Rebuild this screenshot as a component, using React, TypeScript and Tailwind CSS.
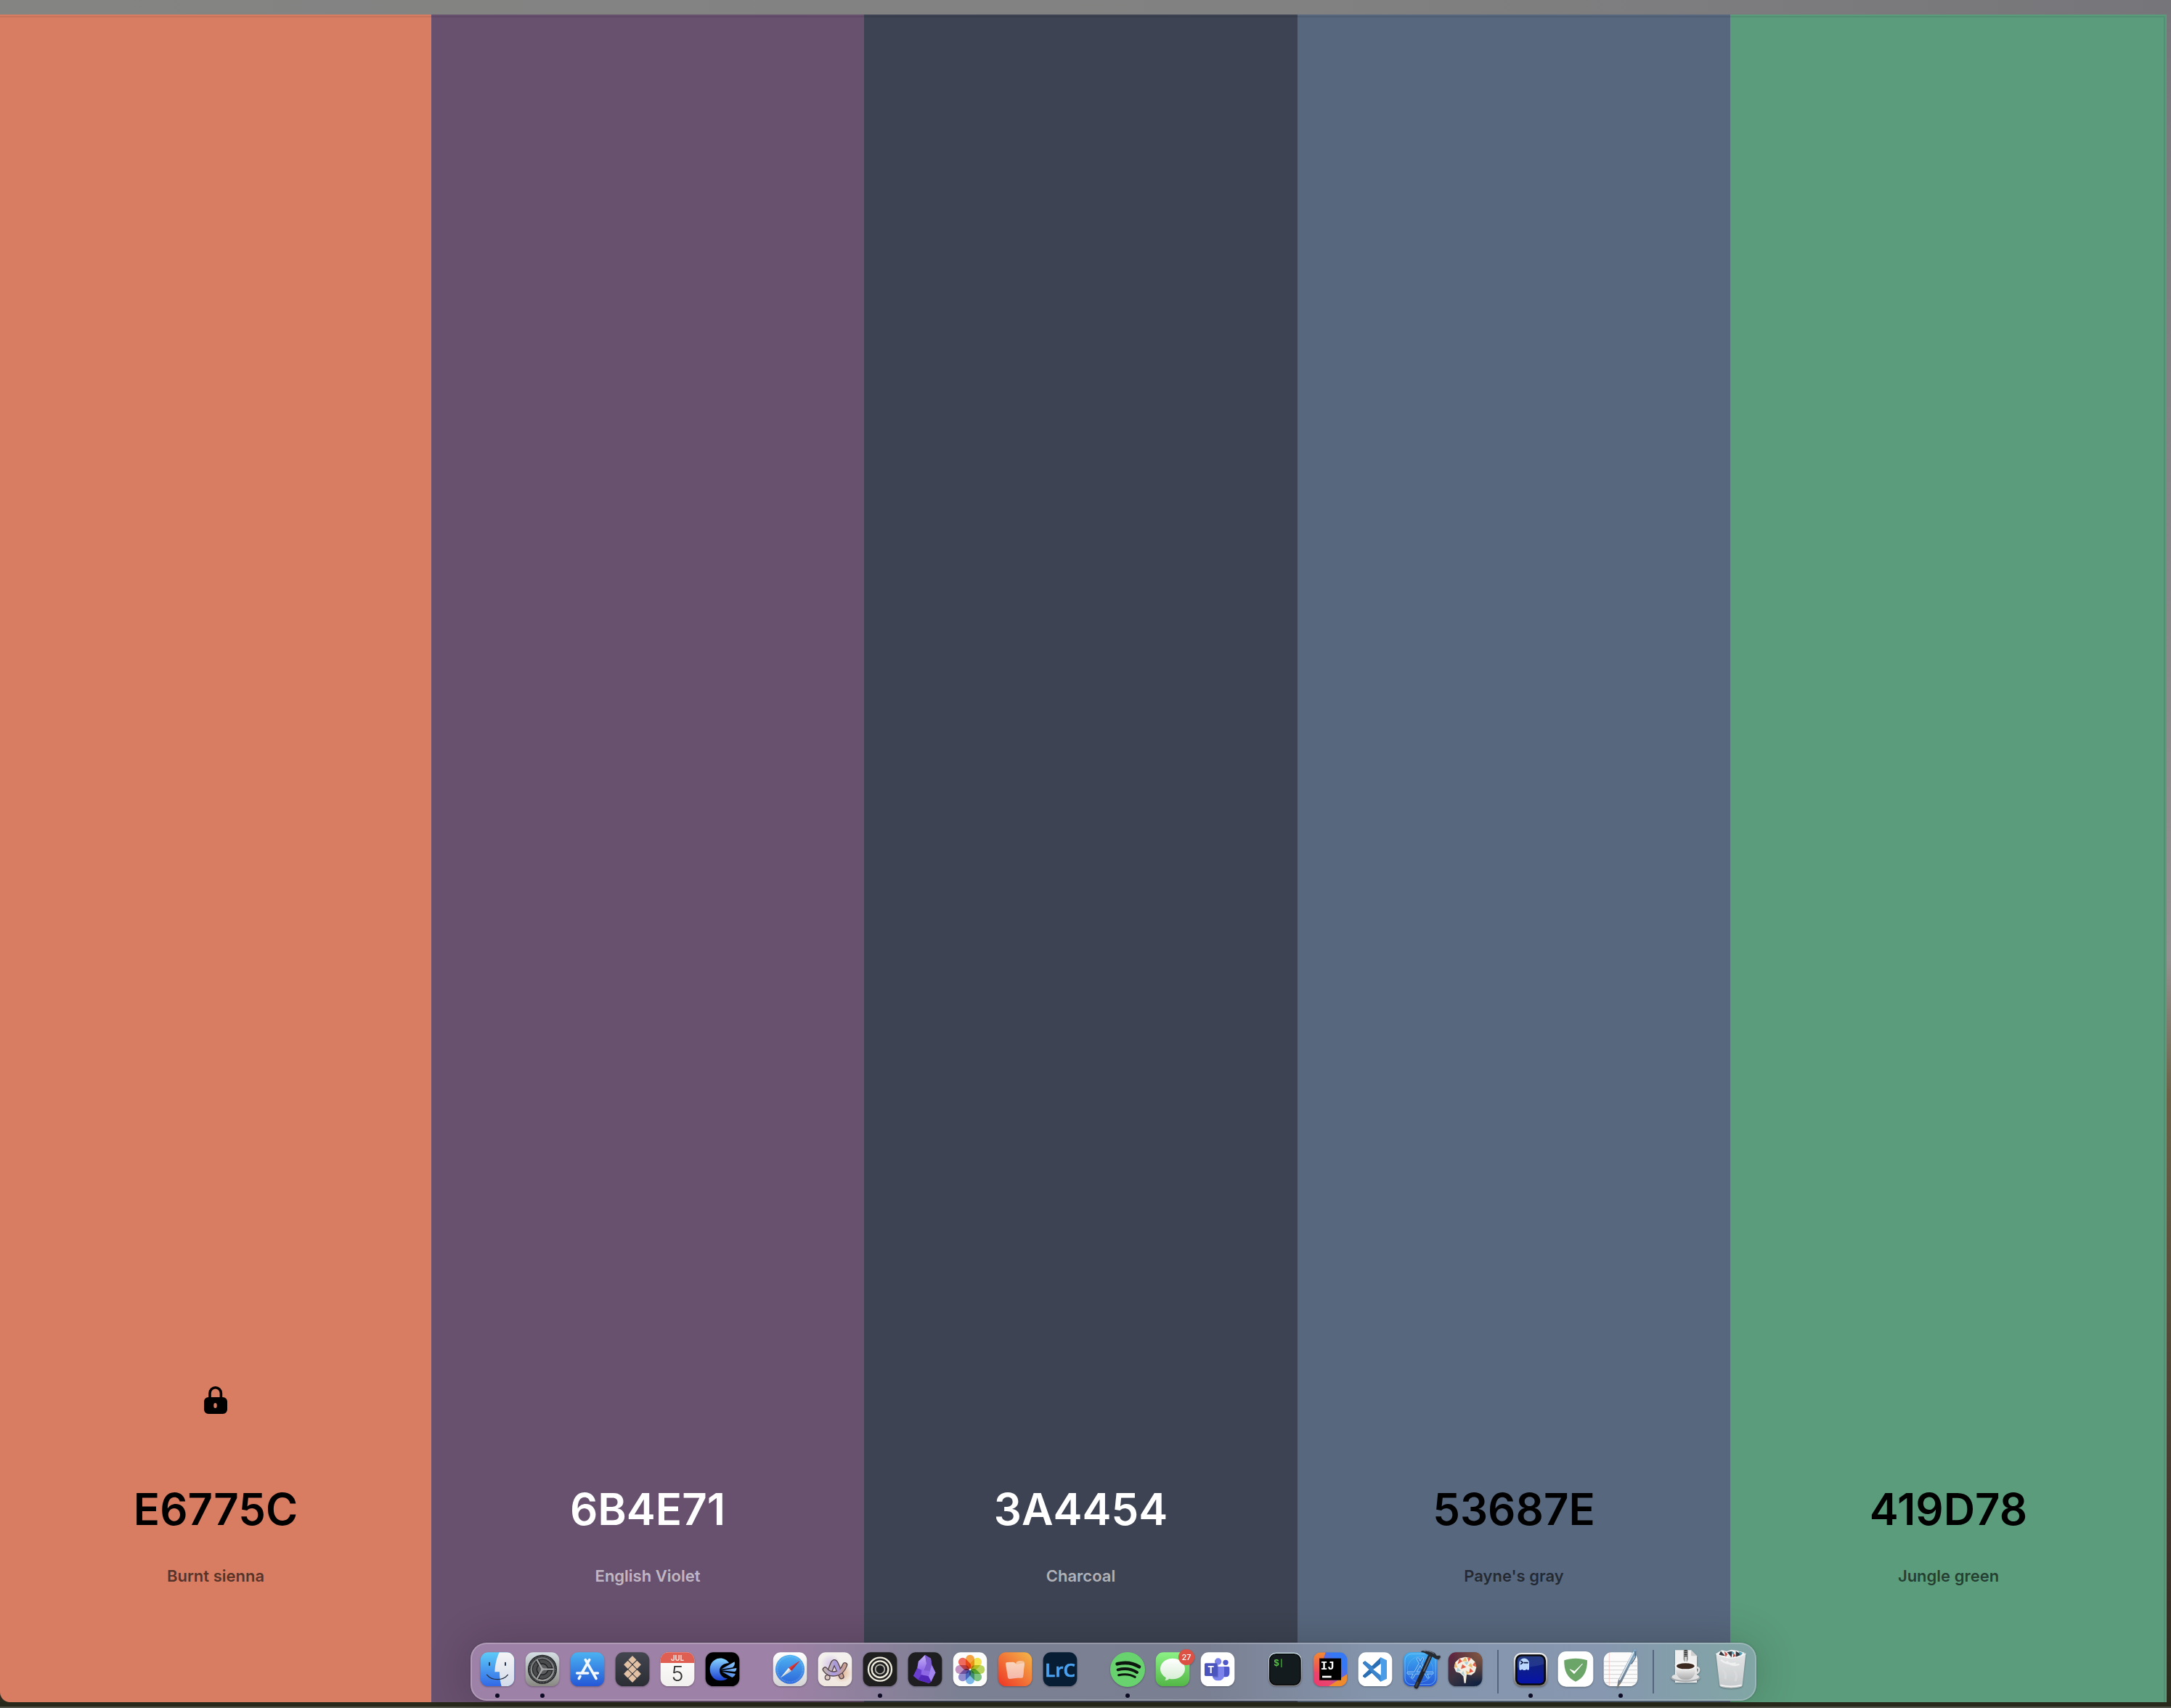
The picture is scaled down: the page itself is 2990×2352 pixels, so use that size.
import type { ReactNode } from "react";

type Swatch = { hex: string; name: string; column: string; ink: string; caption: string; locked?: boolean };

const swatches: Swatch[] = [
  { hex: "E6775C", name: "Burnt sienna", column: "bg-[#d87c62] w-[594px] rounded-bl-[14px]", ink: "text-black", caption: "text-black/60", locked: true },
  { hex: "6B4E71", name: "English Violet", column: "bg-[#68506f] w-[596px]", ink: "text-white", caption: "text-white/60" },
  { hex: "3A4454", name: "Charcoal", column: "bg-[#3d4352] w-[597px]", ink: "text-white", caption: "text-white/60" },
  { hex: "53687E", name: "Payne's gray", column: "bg-[#57677d] w-[596px]", ink: "text-black", caption: "text-black/60" },
  { hex: "419D78", name: "Jungle green", column: "bg-[#5b9c7c] w-[601px]", ink: "text-black", caption: "text-black/60" },
];

function LockIcon() {
  return (
    <svg viewBox="0 0 32 40" className="h-10 w-8" aria-hidden="true">
      <path d="M8 18V10.500a7.700 7.700 0 0 1 15.400 0V18" fill="none" stroke="#000" strokeWidth="3.600" />
      <path
        fillRule="evenodd"
        d="M6 16H26a6 6 0 0 1 6 6V33a6 6 0 0 1-6 6H6a6 6 0 0 1-6-6V22a6 6 0 0 1 6-6ZM15.500 24a2.200 2.200 0 0 0-2.200 2.200v2.600a2.200 2.200 0 0 0 4.400 0v-2.600a2.200 2.200 0 0 0-2.200-2.200Z"
      />
    </svg>
  );
}

function SwatchColumn({ swatch }: { swatch: Swatch }) {
  return (
    <section className={`flex shrink flex-col items-center justify-end pb-40 ${swatch.column}`}>
      {swatch.locked && (
        <button aria-label="Unlock color" className="mb-[94px]">
          <LockIcon />
        </button>
      )}
      <button className={`text-[60px] leading-[72px] font-semibold ${swatch.ink}`}>{swatch.hex}</button>
      <button className={`mt-[42px] text-[22px] leading-[28px] font-semibold ${swatch.caption}`}>{swatch.name}</button>
    </section>
  );
}

function Gradient({ id, from, to, diagonal }: { id: string; from: string; to: string; diagonal?: boolean }) {
  return (
    <linearGradient id={id} x1={diagonal ? "1" : "0"} y1="0" x2="0" y2="1">
      <stop offset="0" stopColor={from} />
      <stop offset="1" stopColor={to} />
    </linearGradient>
  );
}

function Tile({ fill }: { fill: string }) {
  return <rect x="8" y="13" width="140" height="140" rx="32" fill={fill} />;
}

function Glyph({ children }: { children: ReactNode }) {
  return (
    <svg viewBox="0 0 156 168" className="h-[56px] w-[52px] overflow-visible drop-shadow-[0_1px_1px_rgba(0,0,0,0.3)]" aria-hidden="true">
      {children}
    </svg>
  );
}

const Finder = (
  <Glyph>
    <Gradient id="fi-a" from="#5ecbf8" to="#3268e6" />
    <Gradient id="fi-b" from="#f5f5f6" to="#d3dbea" />
    <clipPath id="fi-c"><rect x="8" y="13" width="140" height="140" rx="32" /></clipPath>
    <Tile fill="url(#fi-a)" />
    <path clipPath="url(#fi-c)" d="M86 13C74 40 68 65 67 94H87C87 115 90 135 95 153H148V13Z" fill="url(#fi-b)" />
    <path d="M45 56V66M111 56V66" stroke="#23364b" strokeWidth="6" strokeLinecap="round" />
    <path d="M35 106C55 131 101 131 121 106" fill="none" stroke="#23303f" strokeWidth="4" strokeLinecap="round" />
  </Glyph>
);

const Settings = (
  <Glyph>
    <Gradient id="se-a" from="#d5dfe4" to="#898883" />
    <Gradient id="se-b" from="#6c6f72" to="#9a9a99" />
    <Tile fill="url(#se-a)" />
    <circle cx="78" cy="83" r="60" fill="#1c1e20" />
    <circle cx="78" cy="83" r="54" fill="none" stroke="#6d7174" strokeWidth="5" strokeDasharray="3 3" />
    <circle cx="78" cy="83" r="46" fill="#4a4c4e" stroke="url(#se-b)" strokeWidth="8" />
    <circle cx="78" cy="83" r="41" fill="none" stroke="#1b1d1f" strokeWidth="3" />
    <path d="M78 83H122M78 83L56 45M78 83L56 121" stroke="#1b1d1f" strokeWidth="14" />
    <circle cx="78" cy="83" r="23" fill="#5b5d5f" stroke="#1b1d1f" strokeWidth="4" />
    <path d="M78 83H124M78 83L55 43M78 83L55 123" stroke="#a3a5a6" strokeWidth="7" />
    <circle cx="78" cy="83" r="6" fill="#a3a5a6" />
  </Glyph>
);

const AppStore = (
  <Glyph>
    <Gradient id="as-a" from="#4bb2f1" to="#2457d6" />
    <Tile fill="url(#as-a)" />
    <path d="M86 44L55 99M48 112L43 121M70 44L114 121M35 99H80M103 99H121" stroke="#f4f8ff" strokeWidth="11" strokeLinecap="round" fill="none" />
  </Glyph>
);

const diamondSpots = [[78, 44], [59, 64], [97, 64], [78, 83], [59, 102], [97, 102], [78, 121]];

const Setapp = (
  <Glyph>
    <Gradient id="sa-a" from="#43464f" to="#2a2d33" />
    <Tile fill="url(#sa-a)" />
    {diamondSpots.map(([x, y]) => (
      <path key={`${x}-${y}`} d={`M${x} ${y - 14}L${x + 14} ${y}L${x} ${y + 14}L${x - 14} ${y}Z`} fill="#e3c1a5" stroke="#e3c1a5" strokeWidth="4" strokeLinejoin="round" />
    ))}
  </Glyph>
);

const Calendar = (
  <Glyph>
    <Gradient id="ca-a" from="#ffffff" to="#f1efed" />
    <Tile fill="url(#ca-a)" />
    <path d="M8 57V45A32 32 0 0 1 40 13H116A32 32 0 0 1 148 45V57Z" fill="#df6052" />
    <text x="78" y="47" textAnchor="middle" fontSize="29" fontWeight="700" fill="#fbe6e2">JUL</text>
    <text x="78" y="132" textAnchor="middle" fontSize="86" fontWeight="300" fill="#2e2e2e">5</text>
  </Glyph>
);

const Comet = (
  <Glyph>
    <Gradient id="co-a" from="#86d4ff" to="#1b3fd0" />
    <Gradient id="co-b" from="#8fd0fb" to="#3d6fe0" diagonal />
    <Tile fill="#000" />
    <path d="M105 57C95 40 75 34 57 39C38 45 26 63 26 83C26 108 44 130 70 130C82 130 93 127 99 121C82 120 66 106 66 89C66 74 78 59 105 57Z" fill="url(#co-a)" />
    <path d="M72 83L128 52Q131 66 120 76ZM74 88L136 78Q137 89 128 93ZM76 93L132 102Q128 113 118 117Z" fill="url(#co-b)" />
  </Glyph>
);

const Safari = (
  <Glyph>
    <Gradient id="sf-a" from="#ffffff" to="#d4d4d4" />
    <Gradient id="sf-b" from="#4fb4f3" to="#2c67d9" />
    <Tile fill="url(#sf-a)" />
    <circle cx="78" cy="83" r="60" fill="url(#sf-b)" />
    <circle cx="78" cy="83" r="53" fill="none" stroke="#b7dcf8" strokeOpacity="0.600" strokeWidth="7" strokeDasharray="1.500 4" />
    <path d="M119 47L72 77L84 89Z" fill="#e33b34" />
    <path d="M39 118L72 77L84 89Z" fill="#f5f5f5" />
    <path d="M39 118L78 83L84 89Z" fill="#c5cbd2" />
    <path d="M119 47L78 83L84 89Z" fill="#b92d33" />
  </Glyph>
);

const arcSwoosh = "M37 84C58 112 104 108 119 65";
const arcPeak = "M56 92L69 60Q75 46 82 60L105 113";

const Arc = (
  <Glyph>
    <Gradient id="ar-a" from="#f3f1ef" to="#efe6df" />
    <linearGradient id="ar-b" x1="0" y1="0" x2="1" y2="0">
      <stop offset="0" stopColor="#bdb0ae" />
      <stop offset="0.450" stopColor="#a99be3" />
      <stop offset="1" stopColor="#c9a08c" />
    </linearGradient>
    <radialGradient id="ar-c">
      <stop offset="0" stopColor="#dfa67c" stopOpacity="0.800" />
      <stop offset="1" stopColor="#dfa67c" stopOpacity="0" />
    </radialGradient>
    <radialGradient id="ar-d">
      <stop offset="0" stopColor="#b69aea" stopOpacity="0.500" />
      <stop offset="1" stopColor="#b69aea" stopOpacity="0" />
    </radialGradient>
    <Tile fill="url(#ar-a)" />
    <circle cx="108" cy="98" r="40" fill="url(#ar-c)" />
    <circle cx="60" cy="62" r="42" fill="url(#ar-d)" />
    <circle cx="47" cy="117" r="10" fill="#dccac0" stroke="#55444a" strokeWidth="4" />
    <path d={arcPeak} fill="none" stroke="#55434b" strokeWidth="22" strokeLinecap="round" strokeLinejoin="round" />
    <path d={arcPeak} fill="none" stroke="url(#ar-b)" strokeWidth="14" strokeLinecap="round" strokeLinejoin="round" />
    <path d={arcSwoosh} fill="none" stroke="#55434b" strokeWidth="22" strokeLinecap="round" />
    <path d={arcSwoosh} fill="none" stroke="url(#ar-b)" strokeWidth="14" strokeLinecap="round" />
    <path d="M80 58L92 86" fill="none" stroke="#a899d8" strokeWidth="13" strokeLinecap="round" />
  </Glyph>
);

const Rings = (
  <Glyph>
    <Tile fill="#1f1f1f" />
    <g fill="none" stroke="#f0eddf">
      <circle cx="78" cy="83" r="48" strokeWidth="7" />
      <circle cx="78" cy="83" r="34" strokeWidth="7" />
      <circle cx="78" cy="83" r="19" strokeWidth="5" stroke="#b9b7ae" />
    </g>
  </Glyph>
);

const Obsidian = (
  <Glyph>
    <Gradient id="ob-a" from="#c6b2f7" to="#8d66e6" />
    <Tile fill="#1e1e20" />
    <path d="M78 24L102 38L106 65L121 97L103 134L94 141L52 128L30 110L46 77L51 50Z" fill="#7a4bd8" />
    <path d="M78 24L51 50L46 79L73 90L84 60Z" fill="url(#ob-a)" />
    <path d="M78 24L102 38L106 65L98 90L76 88L85 60Z" fill="#7c5ccf" />
    <path d="M106 65L121 97L103 134L92 112L98 90Z" fill="#a184ee" />
    <path d="M46 79L30 110L49 126L62 106L64 87Z" fill="#6a3fd0" />
    <path d="M64 86L98 90L92 112L62 106Z" fill="#8e68e4" />
    <path d="M62 106L92 112L103 134L94 141L49 126Z" fill="#5327b8" />
  </Glyph>
);

const petals = ["#f59a2c", "#f2e03b", "#b0cf4a", "#6dbb72", "#6fb0e6", "#8480c8", "#bb86bd", "#ec5b4c"];

const Photos = (
  <Glyph>
    <Tile fill="#fdfdfd" />
    <g className="isolate">
      {petals.map((color, i) => (
        <rect key={color} x="60" y="23" width="36" height="59" rx="18" fill={color} opacity="0.900" transform={`rotate(${i * 45} 78 84)`} className="mix-blend-multiply" />
      ))}
    </g>
    <circle cx="78" cy="84" r="4" fill="#f3f3ef" />
  </Glyph>
);

const Paste = (
  <Glyph>
    <Gradient id="pa-a" from="#f5b94a" to="#ee3324" diagonal />
    <Gradient id="pa-b" from="#f9d6be" to="#f5b6a8" />
    <Tile fill="url(#pa-a)" />
    <path d="M82 56Q86 48 98 48Q118 48 117 58L111 114Q110 119 104 119L80 116Z" fill="#f6c29a" />
    <path d="M39 60Q39 54 46 54L70 53C78 53 80 64 90 62L112 58Q117 58 116 64L111 112Q110 117 104 117L56 123Q49 123 48 117Z" fill="url(#pa-b)" />
  </Glyph>
);

const Lightroom = (
  <Glyph>
    <Tile fill="#061d34" />
    <text x="78" y="114" textAnchor="middle" fontSize="78" fontWeight="600" fill="#4aa3f2" stroke="#4aa3f2" strokeWidth="2" className="font-['Open_Sans',sans-serif]">LrC</text>
  </Glyph>
);

const Spotify = (
  <Glyph>
    <circle cx="78" cy="84" r="72" fill="#67d26e" />
    <path d="M35 61Q86 48 126 73" fill="none" stroke="#0d160e" strokeWidth="14" strokeLinecap="round" />
    <path d="M38 85Q82 74 117 96" fill="none" stroke="#0d160e" strokeWidth="12" strokeLinecap="round" />
    <path d="M41 107Q80 98 109 115" fill="none" stroke="#0d160e" strokeWidth="9" strokeLinecap="round" />
  </Glyph>
);

const Messages = (
  <Glyph>
    <Gradient id="me-a" from="#8cf285" to="#52b746" />
    <Gradient id="me-b" from="#ffffff" to="#d5edd2" />
    <Tile fill="url(#me-a)" />
    <path d="M78 38C106 38 129 57 129 81C129 105 106 124 78 124Q70 124 64 122Q57 129 46 129Q51 123 50 117C36 109 27 96 27 81C27 57 50 38 78 38Z" fill="url(#me-b)" />
    <circle cx="135" cy="33" r="33" fill="#dd5145" />
    <text x="135" y="45" textAnchor="middle" fontSize="33" fontWeight="500" fill="#fff">27</text>
  </Glyph>
);

const Teams = (
  <Glyph>
    <Tile fill="#fff" />
    <circle cx="111" cy="55" r="11" fill="#5059c9" />
    <path d="M98 72H122Q127 72 127 77V98Q127 115 111 115H98Z" fill="#5059c9" />
    <circle cx="80" cy="51" r="14" fill="#7b83eb" />
    <path d="M56 72H100Q105 72 105 77V104Q105 130 80 130Q60 130 56 110Z" fill="#7b83eb" />
    <path d="M60 66H80V116H58Z" fill="#3f469f" opacity="0.500" />
    <rect x="24" y="58" width="53" height="53" rx="5" fill="#4b53bc" />
    <text x="50" y="99" textAnchor="middle" fontSize="40" fontWeight="700" fill="#fff">T</text>
  </Glyph>
);

const ITerm = (
  <Glyph>
    <Gradient id="it-a" from="#d9f0f7" to="#8b8683" />
    <rect x="9" y="14" width="137" height="138" rx="31" fill="url(#it-a)" />
    <rect x="14" y="20" width="127" height="127" rx="26" fill="#131b1e" stroke="#030405" strokeWidth="4" />
    <text x="31" y="70" fontSize="38" fontWeight="700" fill="#5cc24b" className="font-['Liberation_Mono',monospace]">$</text>
    <rect x="60" y="40" width="5" height="35" fill="#3d8c37" />
  </Glyph>
);

const IntelliJ = (
  <Glyph>
    <clipPath id="ij-c"><rect x="8" y="13" width="140" height="140" rx="32" /></clipPath>
    <linearGradient id="ij-a" x1="0" y1="1" x2="1" y2="0">
      <stop offset="0" stopColor="#f0386b" />
      <stop offset="0.300" stopColor="#e8466f" />
      <stop offset="0.550" stopColor="#6b63d8" />
      <stop offset="0.750" stopColor="#3478f6" />
      <stop offset="1" stopColor="#3478f6" />
    </linearGradient>
    <Gradient id="ij-b" from="#f28a30" to="#ee4560" />
    <g clipPath="url(#ij-c)">
      <rect x="8" y="13" width="140" height="140" fill="url(#ij-a)" />
      <path d="M8 13H59L44 60L30 100L8 90Z" fill="url(#ij-b)" />
      <path d="M148 103L72 153H148Z" fill="#f08b2d" />
    </g>
    <rect x="33" y="38" width="90" height="90" fill="#000" />
    <text x="38" y="84" fontSize="48" fontWeight="700" fill="#fff" className="font-['Liberation_Mono',monospace]">IJ</text>
    <rect x="45" y="110" width="38" height="8" fill="#fff" />
  </Glyph>
);

const VSCode = (
  <Glyph>
    <Tile fill="#fff" />
    <path d="M101 34L64 70L36 49L27 55V59L53 84L27 109V113L36 119L64 98L101 134V108L76 84L101 60Z" fill="#2a6fb4" />
    <path d="M27 58L36 49L101 102V134Z" fill="#3a84cc" />
    <path d="M97 36L101 34L126 46V122L101 134L97 132Q101 130 101 125V43Q101 38 97 36Z" fill="#4b9de8" />
    <path d="M101 60V108L70 84Z" fill="#fff" />
  </Glyph>
);

const Xcode = (
  <Glyph>
    <Gradient id="xc-a" from="#3fb0f2" to="#2456d8" />
    <Tile fill="url(#xc-a)" />
    <rect x="15" y="20" width="126" height="126" rx="27" fill="none" stroke="#8cc8f8" strokeWidth="2" />
    <circle cx="78" cy="83" r="53" fill="none" stroke="#6fb6f2" strokeWidth="1.500" />
    <path d="M88 40L46 116M68 40L110 116M28 98H128" stroke="#b7dcfb" strokeWidth="11" strokeLinecap="round" />
    <path d="M88 40L46 116M68 40L110 116M28 98H128" stroke="#3488e4" strokeWidth="7" strokeLinecap="round" />
    <path d="M121 24L62 154" stroke="#20242a" strokeWidth="18" strokeLinecap="round" />
    <path d="M120 30L92 92" stroke="#5a6069" strokeWidth="6" />
    <path d="M67 138L61 152" stroke="#3b3f46" strokeWidth="8" strokeLinecap="round" />
    <path d="M82 8Q108 0 138 16L146 27L160 26L162 33L154 43L140 40L130 32L104 20Q94 13 82 12Z" fill="#262a31" />
    <path d="M92 8Q114 4 136 19" stroke="#737a84" strokeWidth="3" fill="none" />
  </Glyph>
);

const Brain = (
  <Glyph>
    <linearGradient id="br-a" x1="0" y1="0" x2="0.800" y2="1">
      <stop offset="0" stopColor="#6a2140" />
      <stop offset="0.500" stopColor="#3c3340" />
      <stop offset="1" stopColor="#0f2140" />
    </linearGradient>
    <radialGradient id="br-b" cx="1" cy="0" r="0.900">
      <stop offset="0" stopColor="#8a583f" />
      <stop offset="1" stopColor="#8a583f" stopOpacity="0" />
    </radialGradient>
    <Tile fill="url(#br-a)" />
    <Tile fill="url(#br-b)" />
    <path d="M54 38L78 32L102 37L118 52L124 74L118 95L103 107L84 104L80 140H74L70 112L56 98L40 94L32 76L37 54Z" fill="#f4ede2" />
    <path d="M54 38L66 50L46 62ZM86 34L102 37L92 52ZM118 52L108 66L124 74ZM66 62L82 74L60 82ZM98 78L112 92L94 98Z" fill="#e25b45" />
    <path d="M78 32L86 50L66 50ZM102 56L108 78L90 68ZM37 54L46 76L32 76ZM80 88L98 98L84 104Z" fill="#e8b86b" />
    <path d="M46 76L60 90L42 92ZM92 52L84 66L74 54ZM70 90L76 110L62 100Z" fill="#a8cfd8" />
  </Glyph>
);

const GhostTerminal = (
  <Glyph>
    <Gradient id="gh-a" from="#f1f1f1" to="#77736f" />
    <Gradient id="gh-b" from="#13276f" to="#0613a8" />
    <rect x="8" y="15" width="140" height="140" rx="32" fill="url(#gh-a)" />
    <rect x="15" y="22" width="126" height="127" rx="25" fill="#08090c" />
    <rect x="23" y="29" width="110" height="113" rx="18" fill="url(#gh-b)" />
    <path d="M23 62V47A18 18 0 0 1 41 29H115A18 18 0 0 1 133 47V62Q80 76 23 76Z" fill="#5a78b8" opacity="0.250" />
    <path d="M31 58A20 20 0 0 1 72 58V82Q72 87 67 86L61 83L55 87H49L43 83L36 87Q31 87 31 82Z" fill="#b9d8fb" />
    <path d="M38 49L46 55L38 61M52 56H66" stroke="#0b1740" strokeWidth="5" fill="none" strokeLinecap="round" strokeLinejoin="round" />
  </Glyph>
);

const Shield = (
  <Glyph>
    <rect x="5" y="9" width="146" height="146" rx="34" fill="#fff" />
    <path d="M78 38C95 38 112 41 126 46C127 88 112 120 78 134C44 120 29 88 31 46C45 41 62 38 78 38Z" fill="#6ba568" />
    <path d="M55 84L72 101L106 61L74 92Z" fill="#fff" stroke="#fff" strokeWidth="3" />
  </Glyph>
);

const TextEdit = (
  <Glyph>
    <Gradient id="te-a" from="#7fa9c9" to="#6d7480" />
    <Tile fill="#fbfbfb" />
    <path d="M8 51H148M8 69H148M8 86H148M8 104H148M8 121H148M14 138H142" stroke="#c8c8c8" strokeWidth="2.500" />
    <path d="M31 14V152" stroke="#efb9b4" strokeWidth="2" />
    <path d="M133 2Q139 -3 142 4L141 20L84 133L62 163L68 128Z" fill="url(#te-a)" />
    <path d="M132 12L73 128" stroke="#e3eaf0" strokeWidth="5" />
    <path d="M138 8L139 34L122 62" stroke="#49647e" strokeWidth="4" fill="none" />
    <path d="M72 137L62 163L80 139Z" fill="#8b7d6b" />
  </Glyph>
);

const JarArchive = (
  <Glyph>
    <Gradient id="ja-a" from="#ffffff" to="#a9a9a9" />
    <path d="M33 4H99L123 28V138H33Z" fill="#efefef" />
    <path d="M99 4V28H123Z" fill="#cfcfcf" />
    <rect x="68" y="4" width="18" height="40" fill="#8c8c8c" />
    <path d="M77 4V44" stroke="#2f2f2f" strokeWidth="12" strokeDasharray="4 4" />
    <rect x="71" y="30" width="12" height="22" rx="4" fill="#d2d2d2" stroke="#666" strokeWidth="2" />
    <ellipse cx="76" cy="118" rx="60" ry="18" fill="#a9acae" />
    <ellipse cx="76" cy="114" rx="56" ry="15" fill="#dfe1e2" />
    <path d="M112 76Q134 72 132 88Q129 104 104 102" fill="none" stroke="#dedede" strokeWidth="8" />
    <path d="M33 68Q34 112 58 124Q77 130 96 124Q119 112 120 68Z" fill="url(#ja-a)" />
    <ellipse cx="76" cy="68" rx="44" ry="18" fill="#f7f7f7" />
    <ellipse cx="76" cy="70" rx="37" ry="12" fill="#3c2a20" />
  </Glyph>
);

const Trash = (
  <Glyph>
    <Gradient id="tr-a" from="#e3e5e6" to="#c6c9cb" />
    <path d="M20 16L40 4L60 8L80 2L104 6L134 14L130 34H24Z" fill="#eceef0" />
    <path d="M36 8L54 28L28 24ZM62 12L84 8L80 34ZM98 8L122 22L98 32Z" fill="#33383e" />
    <path d="M50 8L64 20L56 32ZM88 16L98 28L86 34Z" fill="#c55146" />
    <path d="M78 8L92 14L86 22ZM110 10L126 16L116 28Z" fill="#4f9fb5" />
    <path d="M16 18Q46 36 78 36Q110 36 139 18L125 150Q122 160 78 161Q34 160 31 150Z" fill="url(#tr-a)" />
    <path d="M16 18Q46 36 78 36Q110 36 139 18" fill="none" stroke="#f8f8f8" strokeWidth="4" />
    <path d="M36 44Q60 66 98 58M60 50Q84 74 112 62" fill="none" stroke="#f7f8f8" strokeWidth="7" opacity="0.700" />
    <path d="M42 84Q60 96 54 124M90 88Q108 102 96 132" fill="none" stroke="#d9dbdd" strokeWidth="9" opacity="0.800" />
    <path d="M34 148Q78 160 122 148" fill="none" stroke="#f3f3f3" strokeWidth="5" />
  </Glyph>
);

type DockApp = { name: string; icon: ReactNode; open?: boolean };

const groups: { divider: "gap" | "line" | "none"; apps: DockApp[] }[] = [
  {
    divider: "gap",
    apps: [
      { name: "Finder", icon: Finder, open: true },
      { name: "System Settings", icon: Settings, open: true },
      { name: "App Store", icon: AppStore },
      { name: "Setapp", icon: Setapp },
      { name: "Calendar", icon: Calendar },
      { name: "Comet", icon: Comet },
    ],
  },
  {
    divider: "gap",
    apps: [
      { name: "Safari", icon: Safari },
      { name: "Arc", icon: Arc },
      { name: "Rings", icon: Rings, open: true },
      { name: "Obsidian", icon: Obsidian },
      { name: "Photos", icon: Photos },
      { name: "Paste", icon: Paste },
      { name: "Lightroom Classic", icon: Lightroom },
    ],
  },
  {
    divider: "gap",
    apps: [
      { name: "Spotify", icon: Spotify, open: true },
      { name: "Messages", icon: Messages },
      { name: "Teams", icon: Teams },
    ],
  },
  {
    divider: "line",
    apps: [
      { name: "Terminal", icon: ITerm },
      { name: "IntelliJ IDEA", icon: IntelliJ },
      { name: "Visual Studio Code", icon: VSCode },
      { name: "Xcode", icon: Xcode },
      { name: "Brain", icon: Brain },
    ],
  },
  {
    divider: "line",
    apps: [
      { name: "Ghostty", icon: GhostTerminal, open: true },
      { name: "AdGuard", icon: Shield },
      { name: "TextEdit", icon: TextEdit, open: true },
    ],
  },
  {
    divider: "none",
    apps: [
      { name: "Archive", icon: JarArchive },
      { name: "Trash", icon: Trash },
    ],
  },
];

function Dock() {
  return (
    <nav
      aria-label="Dock"
      className="flex h-20 rounded-[22px] border-2 border-white/20 bg-[linear-gradient(90deg,#9e81a6_0%,#9e81a6_24%,#7c8093_38%,#7a7f92_57%,#8494ab_70%,#8697af_88%,#81a6a5_100%)] bg-origin-border pr-0.5 pl-1 shadow-[0_0_60px_rgba(0,0,0,0.2),0_0_2px_rgba(0,0,0,0.4)]"
    >
      {groups.map((group, index) => (
        <div key={index} className="flex">
          {group.apps.map((app) => (
            <button key={app.name} aria-label={app.name} className="flex w-[62px] flex-col items-center pt-[7px]">
              {app.icon}
              {app.open && <span className="mt-[5px] size-1.5 rounded-full bg-[#0d0a24]" />}
            </button>
          ))}
          {group.divider === "gap" && <div className="w-[31px]" />}
          {group.divider === "line" && (
            <div className="flex w-7 justify-center py-2">
              <div className="w-0.5 bg-[#56657d]" />
            </div>
          )}
        </div>
      ))}
    </nav>
  );
}

export default function App() {
  return (
    <div className="relative flex min-h-screen flex-col overflow-hidden bg-[#2c2c1e] font-[Inter,sans-serif]">
      <div className="h-5 bg-[linear-gradient(90deg,#848483,#828181_60%,#76767a)]" />
      <div className="flex grow bg-[linear-gradient(180deg,#77777b_0%,#949090_56%,#6d6248_64%,#42352e_90%,#2c2c1e_100%)] pr-1.5">
        <main className="relative flex grow">
          {swatches.map((swatch) => (
            <SwatchColumn key={swatch.hex} swatch={swatch} />
          ))}
          <div className="pointer-events-none absolute inset-x-0 top-0.5 bottom-0 mr-0.5 border-t-2 border-r-2 border-black/8" />
        </main>
      </div>
      <div className="h-2 border-b-2 border-[#54554a] bg-[#29291b]" />
      <div className="absolute inset-x-0 bottom-2.5 flex justify-center pl-[77px]">
        <Dock />
      </div>
    </div>
  );
}
